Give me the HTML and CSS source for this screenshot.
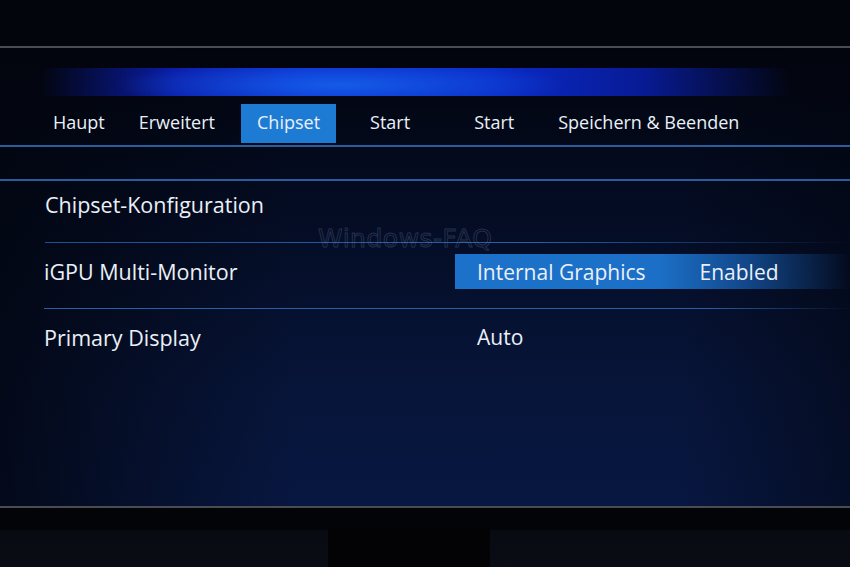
FILE: index.html
```html
<!DOCTYPE html>
<html lang="de">

<head>
  <meta charset="UTF-8" />
  <meta name="viewport" content="width=device-width, initial-scale=1.0" />
  <title>BIOS - Chipset</title>
  <link rel="stylesheet" href="styles.css">
</head>

<body>
  <!-- Monitor bezel top -->
  <div class="bezel-top"></div>
  <div class="bezel-rule"></div>

  <!-- Screen -->
  <div class="screen">
    <div class="glow"></div>

    <nav class="tabs">
      <span class="tab">Haupt</span>
      <span class="tab">Erweitert</span>
      <span class="tab active">Chipset</span>
      <span class="tab">Start</span>
      <span class="tab">Start</span>
      <span class="tab">Speichern &amp; Beenden</span>
    </nav>

    <div class="spacer"></div>

    <section class="settings">
      <div class="row row-title">Chipset-Konfiguration</div>
      <div class="row">
        <span class="label">iGPU Multi-Monitor</span>
        <span class="value selected">
          <span>Internal Graphics</span>
          <span class="state">Enabled</span>
        </span>
      </div>
      <div class="row row-last">
        <span class="label">Primary Display</span>
        <span class="value"><span>Auto</span></span>
      </div>
    </section>

    <span class="watermark">Windows-FAQ</span>
  </div>

  <!-- Monitor bezel bottom and stand -->
  <div class="bezel-rule"></div>
  <div class="bezel-bottom">
    <div class="stand"></div>
  </div>
</body>

</html>
```

FILE: styles.css
```css
* {
  box-sizing: border-box;
  margin: 0;
  padding: 0;
}

html,
body {
  font-family: 'Open Sans', 'Noto Sans', sans-serif;
  background-color: #03050c;
  color: #eaf0f8;
}

body {
  width: 850px;
  height: 567px;
  overflow: hidden;
  display: flex;
  flex-direction: column;
}

.bezel-top {
  height: 46px;
  background-color: #03050c;
}

.bezel-rule {
  height: 2px;
  background-color: #4a4c52;
}

.screen {
  position: relative;
  height: 458px;
  display: flex;
  flex-direction: column;
  padding-top: 20px;
  background:
    linear-gradient(90deg, rgba(2, 5, 14, 0.75) 0%, rgba(2, 5, 14, 0) 35%, rgba(2, 5, 14, 0) 80%, rgba(2, 5, 14, 0.5) 100%),
    linear-gradient(180deg, #02040d 0%, #040b20 30%, #07153a 75%, #081741 100%);
}

/* blue light strip above the tabs */
.glow {
  height: 28px;
  margin: 0 60px 0 40px;
  background:
    radial-gradient(ellipse 30% 90% at 40% 60%, rgba(22, 100, 235, 0.85) 0%, rgba(22, 100, 235, 0) 100%),
    linear-gradient(90deg, rgba(8, 20, 120, 0) 0%, #0a1ca8 18%, #0c2cd0 35%, #0a2ac8 60%, #081b96 80%, rgba(8, 20, 90, 0) 100%);
}

.tabs {
  display: flex;
  align-items: stretch;
  height: 39px;
  margin-top: 8px;
  padding-left: 37px;
  font-size: 18px;
}

.tab {
  display: flex;
  align-items: center;
  padding: 0 16px 3px;
}

.tab:nth-child(1) {
  margin-right: 2px;
}

.tab:nth-child(2) {
  margin-right: 10px;
}

.tab:nth-child(3) {
  margin-right: 18px;
}

.tab:nth-child(4) {
  margin-right: 32px;
}

.tab:nth-child(5) {
  margin-right: 12px;
}

.tab.active {
  background-color: #1e7bd4;
}

.spacer {
  height: 36px;
  margin-top: 2px;
  border-top: 2px solid #2b5c9c;
  border-bottom: 2px solid #2b5c9c;
}

.settings {
  display: flex;
  flex-direction: column;
  font-size: 21.5px;
}

.row {
  display: flex;
  align-items: center;
  height: 66px;
  margin-left: 44px;
  padding-bottom: 8px;
  border-bottom: 1px solid transparent;
  border-image: linear-gradient(90deg, #2a5ea8 0%, #2a5ea8 82%, rgba(42, 94, 168, 0) 100%) 1;
}

.row-title {
  height: 62px;
  padding-bottom: 14px;
  margin-left: 45px;
  border-image: linear-gradient(90deg, #1f4e94 0%, #2a5ea8 60%, rgba(42, 94, 168, 0) 100%) 1;
}

.row-last {
  border: none;
  padding-bottom: 10px;
}

.label {
  width: 411px;
}

.value {
  display: flex;
  align-items: center;
  flex: 1;
  height: 35px;
  padding-left: 22px;
  font-size: 21px;
}

.value .state {
  margin-left: 54px;
}

.value.selected {
  background: linear-gradient(90deg, #1c72ca 0%, #1b6fc6 52%, rgba(22, 90, 170, 0.75) 74%, rgba(16, 50, 110, 0) 100%);
}

.watermark {
  position: absolute;
  left: 318px;
  top: 176px;
  font-family: 'DejaVu Sans', sans-serif;
  font-size: 25px;
  letter-spacing: 0.5px;
  color: transparent;
  -webkit-text-stroke: 1px rgba(120, 140, 175, 0.28);
}

.bezel-bottom {
  flex: 1;
  display: flex;
  justify-content: center;
  padding-top: 20px;
  background: linear-gradient(180deg, #030407 0%, #030407 35%, #080b12 40%, #090c14 100%);
}

.stand {
  width: 162px;
  margin-left: -32px;
  background-color: #030305;
}
```
